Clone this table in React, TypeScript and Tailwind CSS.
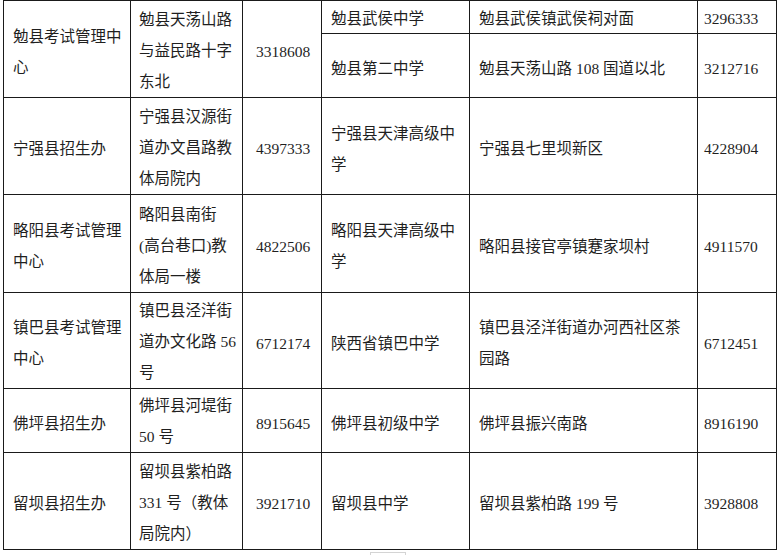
import React from 'react';

// One row of the contact table. Lines are split by hand, the way the source shows them.
interface Row {
  office: string[];
  address: string[];
  phone: string;
  schools: { name: string[]; address: string[]; phone: string }[];
  h: number;
  height: string;
}

const rows: Row[] = [
  {
    office: ['勉县考试管理中', '心'],
    address: ['勉县天荡山路', '与益民路十字', '东北'],
    phone: '3318608',
    schools: [
      { name: ['勉县武侯中学'], address: ['勉县武侯镇武侯祠对面'], phone: '3296333' },
      { name: ['勉县第二中学'], address: ['勉县天荡山路 108 国道以北'], phone: '3212716' },
    ],
    h: 97,
    height: 'h-[97px]',
  },
  {
    office: ['宁强县招生办'],
    address: ['宁强县汉源街', '道办文昌路教', '体局院内'],
    phone: '4397333',
    schools: [{ name: ['宁强县天津高级中', '学'], address: ['宁强县七里坝新区'], phone: '4228904' }],
    h: 97,
    height: 'h-[97px]',
  },
  {
    office: ['略阳县考试管理', '中心'],
    address: ['略阳县南街', '(高台巷口)教', '体局一楼'],
    phone: '4822506',
    schools: [{ name: ['略阳县天津高级中', '学'], address: ['略阳县接官亭镇蹇家坝村'], phone: '4911570' }],
    h: 98,
    height: 'h-[98px]',
  },
  {
    office: ['镇巴县考试管理', '中心'],
    address: ['镇巴县泾洋街', '道办文化路 56', '号'],
    phone: '6712174',
    schools: [{ name: ['陕西省镇巴中学'], address: ['镇巴县泾洋街道办河西社区茶', '园路'], phone: '6712451' }],
    h: 96,
    height: 'h-[96px]',
  },
  {
    office: ['佛坪县招生办'],
    address: ['佛坪县河堤街', '50 号'],
    phone: '8915645',
    schools: [{ name: ['佛坪县初级中学'], address: ['佛坪县振兴南路'], phone: '8916190' }],
    h: 64,
    height: 'h-[64px]',
  },
  {
    office: ['留坝县招生办'],
    address: ['留坝县紫柏路', '331 号（教体', '局院内）'],
    phone: '3921710',
    schools: [{ name: ['留坝县中学'], address: ['留坝县紫柏路 199 号'], phone: '3928808' }],
    h: 97,
    height: 'h-[97px]',
  },
];

// text in the source sits a few px below the cell middle; push it down with top padding
// as far as the row height allows
const padTop: Record<number, string> = {
  0: 'pt-0',
  1: 'pt-[1px]',
  2: 'pt-[2px]',
  3: 'pt-[3px]',
  4: 'pt-[4px]',
  5: 'pt-[5px]',
};
const pt = (h: number, n: number) => padTop[Math.max(0, Math.min(5, h - n * 31 - 1))];

const Lines: React.FC<{ lines: string[] }> = ({ lines }) => (
  <>
    {lines.map((l, i) => (
      <React.Fragment key={i}>
        {i > 0 && <br />}
        {l}
      </React.Fragment>
    ))}
  </>
);

const td = 'border border-[#1a1a1a] align-middle whitespace-nowrap';

const App: React.FC = () => {
  return (
    <div
      className="w-[781px] h-[555px] bg-white text-[#1f1f1f] text-[15.5px] leading-[31px] overflow-hidden"
      style={{ fontFamily: '"Liberation Serif", "Noto Sans CJK SC", serif' }}
    >
      <table className="ml-[3px] w-[773px] table-fixed border-collapse">
        <colgroup>
          <col className="w-[127px]" />
          <col className="w-[112px]" />
          <col className="w-[79px]" />
          <col className="w-[148px]" />
          <col className="w-[228px]" />
          <col className="w-[79px]" />
        </colgroup>
        <tbody>
          {rows.map((row, ri) =>
            row.schools.map((s, si) => {
              const split = row.schools.length > 1;
              const first = split && si === 0;
              // the short first sub-row of 勉县 needs a tighter line box
              const sh = split ? (si === 0 ? 33 : 64) : row.h;
              const sub = (n: number) => (first ? 'leading-[24px] pt-[3px]' : pt(sh, n));
              return (
                <tr key={`${ri}-${si}`} className={split ? (si === 0 ? 'h-[33px]' : 'h-[64px]') : row.height}>
                  {si === 0 && (
                    <>
                      <td rowSpan={row.schools.length} className={`${td} ${pt(row.h, row.office.length)} pl-[9px]`}>
                        <Lines lines={row.office} />
                      </td>
                      <td rowSpan={row.schools.length} className={`${td} ${pt(row.h, row.address.length)} pl-[8px]`}>
                        <Lines lines={row.address} />
                      </td>
                      <td rowSpan={row.schools.length} className={`${td} ${pt(row.h, 1)} pl-[13px]`}>
                        {row.phone}
                      </td>
                    </>
                  )}
                  <td className={`${td} ${sub(s.name.length)} pl-[9px]`}>
                    <Lines lines={s.name} />
                  </td>
                  <td className={`${td} ${sub(s.address.length)} pl-[9px]`}>
                    <Lines lines={s.address} />
                  </td>
                  <td className={`${td} ${sub(1)} pl-[6px]`}>{s.phone}</td>
                </tr>
              );
            })
          )}
        </tbody>
      </table>
      <div className="ml-[370px] mt-[2px] w-[36px] h-[8px] border border-[#d4d4d4]" />
    </div>
  );
};

export default App;
